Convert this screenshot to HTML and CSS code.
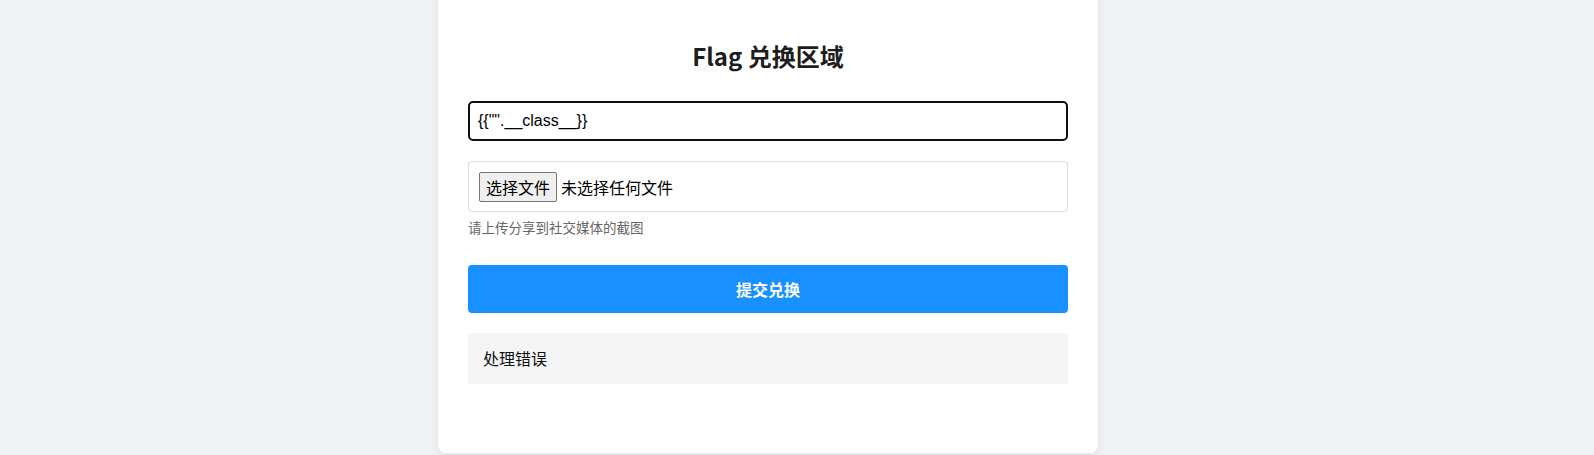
FILE: index.html
```html
<!DOCTYPE html>
<html lang="zh-CN">
<head>
<meta charset="utf-8">
<title>Flag 兑换区域</title>
<link rel="stylesheet" href="styles.css">
</head>
<body>
<main class="card">
  <h2 class="title">Flag 兑换区域</h2>
  <form class="form">
    <div class="text-field">{{"".__class__}}</div>
    <div class="file-box">
      <span class="file-btn">选择文件</span>
      <span class="file-name">未选择任何文件</span>
    </div>
    <p class="hint">请上传分享到社交媒体的截图</p>
    <button type="button" class="submit">提交兑换</button>
  </form>
  <div class="result">处理错误</div>
</main>
</body>
</html>
```

FILE: styles.css
```css
* { box-sizing: border-box; }

html, body {
  margin: 0;
  background: #f0f2f5;
  font-family: "Noto Sans CJK SC", "Noto Sans", sans-serif;
  color: #222;
  height: 100%;
  overflow: hidden;
}

body {
  padding: 0 58px 0 0;
}

.card {
  width: 660px;
  margin: -20px auto 0;
  padding: 60px 30px 69px;
  background: #fff;
  border-radius: 8px;
  box-shadow: 0 2px 10px rgba(0, 0, 0, 0.08);
}

.title {
  margin: 0 0 30px;
  text-align: center;
  font-size: 24px;
  line-height: 31px;
  font-weight: 700;
  color: #1e1e1e;
}

.form {
  display: flex;
  flex-direction: column;
}

.text-field {
  height: 40px;
  border: 2px solid #101010;
  border-radius: 5px;
  padding: 8px 8px;
  font-family: "Liberation Sans", Arial, sans-serif;
  font-size: 16px;
  line-height: 20px;
  color: #000;
}

.file-box {
  margin-top: 20px;
  height: 51px;
  border: 1px solid #ddd;
  border-radius: 4px;
  padding: 0 10px;
  display: flex;
  align-items: center;
  gap: 4px;
  font-size: 16px;
  color: #000;
}

.file-btn {
  display: inline-flex;
  align-items: center;
  height: 30px;
  padding: 0 6px;
  background: #efefef;
  border: 1px solid #767676;
  border-radius: 2px;
  font-size: 16px;
  line-height: 20px;
  color: #000;
  margin-top: 1px;
}

.file-name {
  line-height: 20px;
}

.hint {
  margin: 6px 0 0;
  font-size: 13.5px;
  line-height: 18px;
  color: #666;
}

.submit {
  margin-top: 29px;
  height: 48px;
  border: none;
  border-radius: 4px;
  background: #1890ff;
  color: #fff;
  font-family: inherit;
  font-size: 16px;
  font-weight: 700;
  line-height: 20px;
}

.result {
  margin-top: 20px;
  height: 51px;
  padding: 15px 15px;
  background: #f5f5f5;
  border-radius: 4px;
  font-size: 16px;
  line-height: 21px;
  color: #111;
}
```
